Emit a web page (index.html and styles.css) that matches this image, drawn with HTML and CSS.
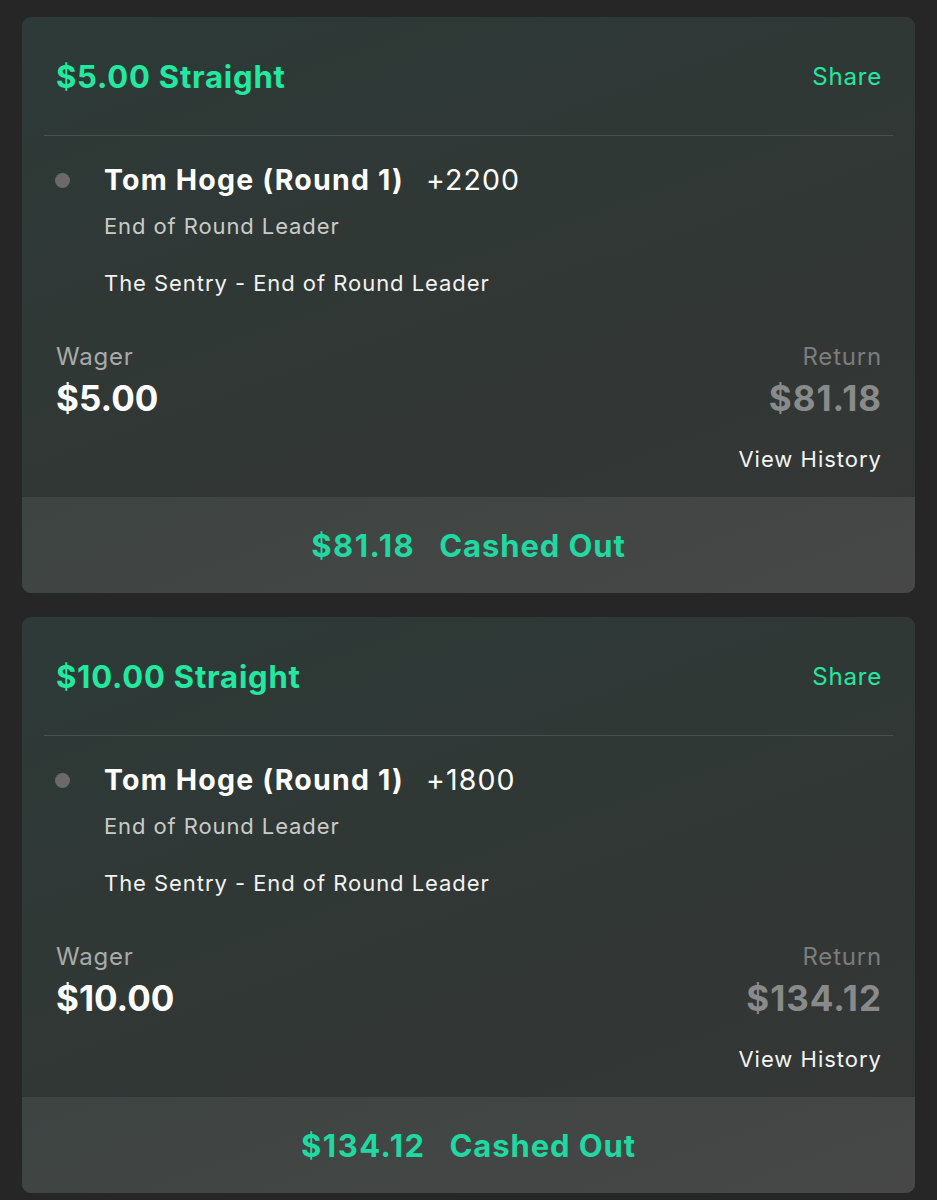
FILE: index.html
```html
<!DOCTYPE html>
<html lang="en">
<head>
<meta charset="UTF-8">
<meta name="viewport" content="width=device-width, initial-scale=1.0"/>
<title>My Bets</title>
<link rel="stylesheet" href="styles.css">
</head>
<body>
<div class="bets">

  <!-- ---------- BET 1 ---------- -->
  <div class="bet">
    <div class="bet-head">
      <span class="bet-title">$5.00 Straight</span>
      <a class="bet-share" href="#">Share</a>
    </div>
    <div class="leg">
      <span class="leg-dot"></span>
      <div class="leg-body">
        <div class="leg-name">Tom Hoge (Round 1)<span class="leg-odds">+2200</span></div>
        <div class="leg-market">End of Round Leader</div>
        <div class="leg-event">The Sentry - End of Round Leader</div>
      </div>
    </div>
    <div class="stats">
      <div class="stat">
        <div class="stat-label">Wager</div>
        <div class="stat-value">$5.00</div>
      </div>
      <div class="stat stat-right">
        <div class="stat-label muted">Return</div>
        <div class="stat-value muted">$81.18</div>
        <a class="history" href="#">View History</a>
      </div>
    </div>
    <div class="cashout"><span class="cashout-amt">$81.18</span><span>Cashed Out</span></div>
  </div>

  <!-- ---------- BET 2 ---------- -->
  <div class="bet">
    <div class="bet-head">
      <span class="bet-title">$10.00 Straight</span>
      <a class="bet-share" href="#">Share</a>
    </div>
    <div class="leg">
      <span class="leg-dot"></span>
      <div class="leg-body">
        <div class="leg-name">Tom Hoge (Round 1)<span class="leg-odds">+1800</span></div>
        <div class="leg-market">End of Round Leader</div>
        <div class="leg-event">The Sentry - End of Round Leader</div>
      </div>
    </div>
    <div class="stats">
      <div class="stat">
        <div class="stat-label">Wager</div>
        <div class="stat-value">$10.00</div>
      </div>
      <div class="stat stat-right">
        <div class="stat-label muted">Return</div>
        <div class="stat-value muted">$134.12</div>
        <a class="history" href="#">View History</a>
      </div>
    </div>
    <div class="cashout"><span class="cashout-amt">$134.12</span><span>Cashed Out</span></div>
  </div>

</div>
</body>
</html>
```

FILE: styles.css
```css
/* ---------- GLOBAL ---------- */
html,body{margin:0;padding:0;background:#262626;color:#fff;font-family:Inter,"Noto Sans",sans-serif;-webkit-font-smoothing:antialiased;}
a{color:inherit;text-decoration:none;}

.bets{display:flex;flex-direction:column;gap:24px;padding:17px 22px 8px;}

/* ---------- CARD ---------- */
.bet{border-radius:9px;overflow:hidden;background:linear-gradient(160deg,#2d3a37 0%,#313735 55%,#343635 100%);}

.bet-head{height:118px;margin:0 22px;padding:0 11px 0 12px;display:flex;align-items:center;justify-content:space-between;border-bottom:1px solid #4a504e;}
.bet-title{color:#22e9a0;font-size:31px;font-weight:700;letter-spacing:.8px;}
.bet-share{color:#22e9a0;font-size:24px;font-weight:400;letter-spacing:.8px;}

/* ---------- LEG ---------- */
.leg{display:flex;padding:26px 34px 0 33px;}
.leg-dot{width:15px;height:15px;border-radius:50%;background:#6a6a6a;margin:11px 0 0 0;flex:none;}
.leg-body{margin-left:34px;}
.leg-name{font-size:28.5px;font-weight:700;line-height:36px;letter-spacing:1.2px;}
.leg-odds{font-weight:400;margin-left:22px;letter-spacing:1.1px;}
.leg-market{color:#c9cbca;font-size:22px;line-height:28px;margin-top:14px;letter-spacing:.9px;}
.leg-event{color:#f2f2f2;font-size:22px;line-height:28px;margin-top:29px;letter-spacing:.95px;}

/* ---------- STATS ---------- */
.stats{display:flex;justify-content:space-between;padding:45px 33px 24px 34px;}
.stat-right{text-align:right;}
.stat-label{color:#a9abaa;font-size:24px;line-height:30px;letter-spacing:.8px;}
.stat-value{font-size:35px;font-weight:700;line-height:44px;margin-top:4px;}
.stat-right .stat-value{letter-spacing:1px;}
.muted{color:#7b7d7c;}
.stat-value.muted{color:#898b8a;}
.history{display:block;font-size:22px;line-height:28px;margin-top:25px;color:#f4f4f4;letter-spacing:1px;}

/* ---------- CASH OUT ---------- */
.cashout{height:96px;display:flex;align-items:center;justify-content:center;gap:24px;background:linear-gradient(160deg,#3d4442 0%,#434645 60%,#474747 100%);color:#1fd9a1;font-size:31px;font-weight:700;letter-spacing:.9px;}
.cashout-amt{letter-spacing:1.5px;}
```
